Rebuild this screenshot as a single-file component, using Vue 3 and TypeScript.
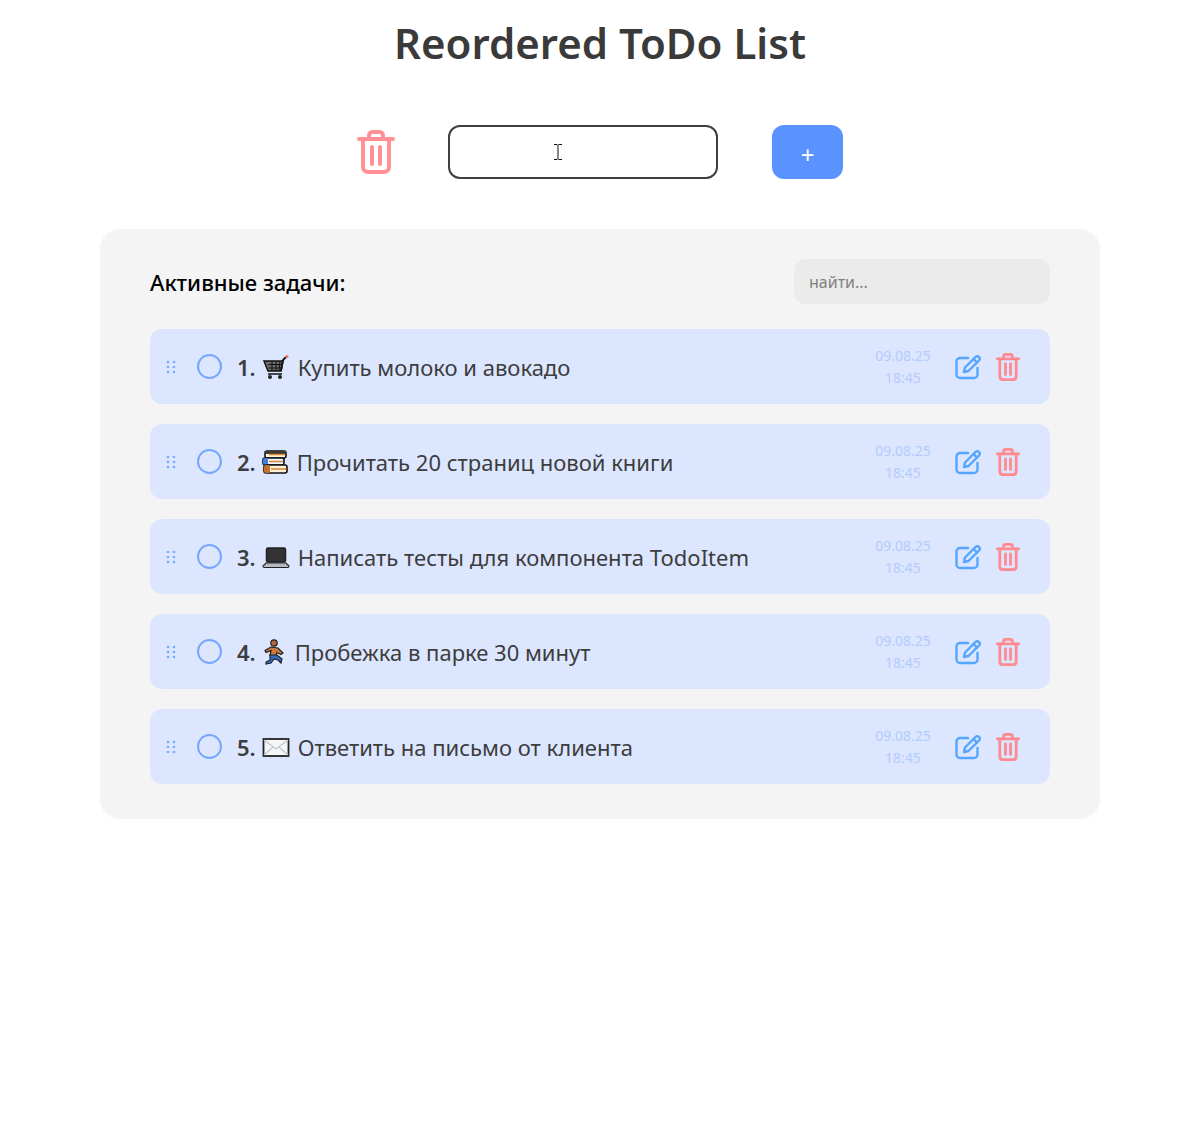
<template>
  <div class="page">
    <h1 class="title">Reordered ToDo List</h1>

    <div class="add-row">
      <button class="clear-btn" aria-label="Очистить">
        <svg width="38" height="44" viewBox="0 0 38 44" fill="none" stroke="#ff9196" stroke-width="4" stroke-linecap="round" stroke-linejoin="round">
          <path d="M2 9h34" />
          <path d="M12 8V5.500C12 3.500 13.500 2 15.500 2h7C24.500 2 26 3.500 26 5.500V8" />
          <path d="M6 9v28c0 2.800 2 5 5 5h16c3 0 5-2.200 5-5V9" />
          <path d="M15 17v17M23 17v17" />
        </svg>
      </button>
      <div class="add-input-wrap">
        <input class="add-input" type="text" />
        <svg class="ibeam" width="8" height="16" viewBox="0 0 8 16" fill="none" stroke="#111" stroke-width="1">
          <path d="M0 .5h3.500M4.500 .5H8M4 1v14M0 15.500h3.500M4.500 15.500H8" />
        </svg>
      </div>
      <button class="add-btn">+</button>
    </div>

    <section class="panel">
      <div class="panel-head">
        <h2 class="panel-title">Активные задачи:</h2>
        <input class="search" type="text" placeholder="найти..." />
      </div>

      <ul class="list">
        <li v-for="(todo, i) in todos" :key="todo.text" class="item">
          <svg class="drag" width="10" height="14" viewBox="0 0 10 14" fill="#7ba9ff">
            <template v-for="y in [2, 7, 12]" :key="y">
              <circle cx="2" :cy="y" r="1.300" />
              <circle cx="8" :cy="y" r="1.300" />
            </template>
          </svg>
          <span class="check"></span>
          <span class="label">
            <b class="num">{{ i + 1 }}.</b>
            <svg class="emoji" :style="{ marginLeft: todo.left + 'px', marginRight: todo.right + 'px' }" width="28" height="28" viewBox="0 0 28 28">
              <g v-if="todo.icon === 'cart'">
                <path d="M2 8h19l-2 10H6z" fill="#6d6d6d" stroke="#111" stroke-width="1.500" />
                <path d="M6 11.500h14M6.500 15h13M10 8v10M14 8v10M18 8l-1 10" stroke="#111" stroke-width="1" fill="none" />
                <path d="M19 18l2-11 3-3" stroke="#111" stroke-width="1.800" fill="none" />
                <path d="M6 21h14" stroke="#111" stroke-width="1.500" />
                <circle cx="8" cy="24" r="2" fill="#222" />
                <circle cx="18" cy="24" r="2" fill="#222" />
                <circle cx="25" cy="3.500" r="1.600" fill="#ef7a55" />
              </g>
              <g v-else-if="todo.icon === 'books'">
                <rect x="4" y="3" width="21" height="7" rx="2" fill="#fff6e0" stroke="#111" stroke-width="1.600" />
                <rect x="4" y="3" width="21" height="3" fill="#3a3a3a" />
                <rect x="2" y="10" width="21" height="7" rx="2" fill="#eef4ff" stroke="#111" stroke-width="1.600" />
                <rect x="2" y="10" width="5" height="7" rx="2" fill="#3f80d8" />
                <rect x="3" y="17" width="23" height="8" rx="2" fill="#fff2d8" stroke="#111" stroke-width="1.600" />
                <rect x="3" y="17" width="6" height="8" rx="2" fill="#c8702a" />
                <path d="M8 6.500h16M8 13.500h14M10 21h15" stroke="#d9882e" stroke-width="1.500" />
              </g>
              <g v-else-if="todo.icon === 'laptop'">
                <rect x="4.500" y="5" width="19" height="14" rx="1.500" fill="#333" stroke="#222" stroke-width="1.500" />
                <path d="M4 20h20l3 3c0 1-.5 1.500-1.500 1.500h-23C1.500 24.500 1 24 1 23z" fill="#b4bac2" stroke="#222" stroke-width="1.200" />
              </g>
              <g v-else-if="todo.icon === 'runner'">
                <circle cx="13" cy="5" r="3.200" fill="#b5693a" stroke="#222" stroke-width="1.200" />
                <path d="M10 9l7 1 5 5-2 1.500-4-2 -1 3h-6l1-5-5 2-1-2z" fill="#c77b3f" stroke="#222" stroke-width="1.200" />
                <path d="M9 17h7l5 4-1 4-3-3-4-1-3 4-5 1v-2l4-2z" fill="#2f6ec4" stroke="#222" stroke-width="1.200" />
              </g>
              <g v-else>
                <rect x="1.500" y="6" width="25" height="17" fill="#f4f6f8" stroke="#222" stroke-width="1.800" />
                <path d="M2 7l12 9 12-9M2 22l9-8M26 22l-9-8" fill="none" stroke="#c3c8cc" stroke-width="1.200" />
              </g>
            </svg>
            <span class="text">{{ todo.text }}</span>
          </span>
          <span class="date">09.08.25<br />18:45</span>
          <div class="actions">
            <svg width="26" height="26" viewBox="0 0 26 26" fill="none" stroke="#54a6ff" stroke-width="2.400" stroke-linecap="round" stroke-linejoin="round">
              <path d="M13 5H5a3.500 3.500 0 0 0-3.500 3.500v13A3.500 3.500 0 0 0 5 25h14a3.500 3.500 0 0 0 3.500-3.500V15" transform="translate(0 -1)" />
              <path d="M10 13.500 20.500 3a2.500 2.500 0 0 1 3.500 0c1 1 1 2.500 0 3.500L13.500 17 9 18z" fill="none" />
              <path d="M18.500 5l3.500 3.500" />
            </svg>
            <svg width="24" height="28" viewBox="0 0 38 44" fill="none" stroke="#ff8a8f" stroke-width="4.400" stroke-linecap="round" stroke-linejoin="round">
              <path d="M2 9h34" />
              <path d="M12 8V5.500C12 3.500 13.500 2 15.500 2h7C24.500 2 26 3.500 26 5.500V8" />
              <path d="M6 9v28c0 2.800 2 5 5 5h16c3 0 5-2.200 5-5V9" />
              <path d="M15 17v17M23 17v17" />
            </svg>
          </div>
        </li>
      </ul>
    </section>
  </div>
</template>

<script setup lang="ts">
interface Todo {
  icon: string
  text: string
  left: number
  right: number
}

const todos: Todo[] = [
  { icon: 'cart', text: 'Купить молоко и авокадо', left: 6, right: 8 },
  { icon: 'books', text: 'Прочитать 20 страниц новой книги', left: 5, right: 8 },
  { icon: 'laptop', text: 'Написать тесты для компонента TodoItem', left: 6, right: 8 },
  { icon: 'runner', text: 'Пробежка в парке 30 минут', left: 5, right: 6 },
  { icon: 'mail', text: 'Ответить на письмо от клиента', left: 6, right: 8 }
]
</script>

<style>
html,
body {
  background: #fff;
}
</style>

<style scoped>
.page {
  width: 1200px;
  height: 1132px;
  padding-top: 14px;
  box-sizing: border-box;
  font-family: "Noto Sans", "Open Sans", sans-serif;
  color: #3d3d3d;
}

.title {
  margin: 0;
  text-align: center;
  font-size: 42px;
  line-height: 58px;
  font-weight: 600;
  color: #3a3a3a;
}

.add-row {
  display: flex;
  align-items: center;
  margin: 53px 0 50px 357px;
}

.clear-btn {
  width: 38px;
  height: 54px;
  padding: 0;
  border: 0;
  background: none;
  display: flex;
  align-items: center;
  margin-right: 53px;
}

.add-input-wrap {
  position: relative;
  margin-right: 54px;
}

.add-input {
  display: block;
  width: 270px;
  height: 54px;
  box-sizing: border-box;
  border: 2px solid #3f3f3f;
  border-radius: 12px;
  background: #fff;
  outline: none;
}

.ibeam {
  position: absolute;
  left: 106px;
  top: 19px;
}

.add-btn {
  width: 71px;
  height: 54px;
  border: 0;
  border-radius: 12px;
  background: #5a93ff;
  color: #fff;
  font-family: inherit;
  font-size: 24px;
  padding: 4px 0 0;
}

.panel {
  margin: 0 100px;
  height: 590px;
  box-sizing: border-box;
  padding: 30px 50px 35px;
  background: #f4f4f4;
  border-radius: 20px;
}

.panel-head {
  display: flex;
  align-items: center;
  justify-content: space-between;
  height: 45px;
  margin-bottom: 25px;
}

.panel-title {
  margin: 0;
  font-size: 22px;
  font-weight: 500;
  color: #000;
}

.search {
  width: 256px;
  height: 45px;
  box-sizing: border-box;
  padding: 0 15px;
  border: 0;
  border-radius: 12px;
  background: #ebebeb;
  font-family: inherit;
  font-size: 16px;
  outline: none;
}

.search::placeholder {
  color: #808080;
  opacity: 1;
}

.list {
  list-style: none;
  margin: 0;
  padding: 0;
  display: flex;
  flex-direction: column;
  gap: 20px;
}

.item {
  height: 75px;
  display: flex;
  align-items: center;
  padding: 0 30px 0 16px;
  background: #dce6ff;
  border-radius: 12px;
}

.drag {
  flex: none;
  margin-right: 21px;
}

.check {
  flex: none;
  width: 25px;
  height: 25px;
  box-sizing: border-box;
  border: 2px solid #76a6ff;
  border-radius: 50%;
  margin-right: 15px;
}

.label {
  flex: 1;
  display: flex;
  align-items: center;
  font-size: 22px;
  color: #3d3d3d;
}

.num {
  font-weight: 600;
}

.emoji {
  flex: none;
}

.date {
  width: 56px;
  margin-right: 24px;
  text-align: center;
  font-size: 14px;
  line-height: 22px;
  color: #b4ccfb;
}

.actions {
  display: flex;
  align-items: center;
  gap: 15px;
}
</style>
